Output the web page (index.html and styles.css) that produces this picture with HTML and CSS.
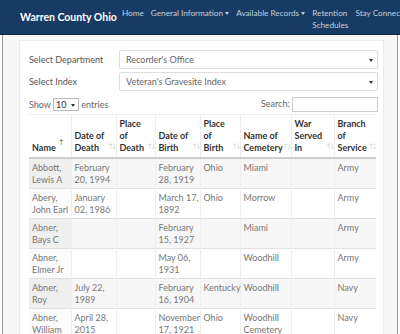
FILE: index.html
```html
<!DOCTYPE html>
<html lang="en">
<head>
  <meta charset="UTF-8">
  <meta name="viewport" content="width=device-width, initial-scale=1.0">
  <title>Veteran's Gravesite Index</title>
  <link rel="stylesheet" href="styles.css">
</head>
<body>
  <nav class="navbar">
    <span class="brand">Warren County Ohio</span>
    <ul class="nav-links">
      <li>Home</li>
      <li>General Information <span class="caret"></span></li>
      <li>Available Records <span class="caret"></span></li>
      <li>Retention<br>Schedules</li>
      <li>Stay Connected</li>
    </ul>
  </nav>

  <div class="frame">
    <div class="panel">
      <div class="field">
        <label>Select Department</label>
        <div class="select">Recorder's Office</div>
      </div>
      <div class="field">
        <label>Select Index</label>
        <div class="select">Veteran's Gravesite Index</div>
      </div>

      <div class="table-tools">
        <div>Show <span class="len">10 <span class="tri"></span></span> entries</div>
        <div>Search: <span class="search"></span></div>
      </div>

      <table id="tabla">
        <colgroup>
          <col style="width:42px">
          <col style="width:45px">
          <col style="width:39px">
          <col style="width:45px">
          <col style="width:40px">
          <col style="width:51px">
          <col style="width:43px">
          <col style="width:42px">
        </colgroup>
        <thead>
          <tr>
            <th class="sorted">Name</th>
            <th>Date of Death</th>
            <th>Place of Death</th>
            <th>Date of Birth</th>
            <th>Place of Birth</th>
            <th>Name of Cemetery</th>
            <th>War Served In</th>
            <th>Branch of Service</th>
          </tr>
        </thead>
        <tbody></tbody>
      </table>
    </div>
  </div>

  <script>
    const registros = [
      ["Abbott, Lewis A", "February 20, 1994", "", "February 28, 1919", "Ohio", "Miami", "", "Army"],
      ["Abery, John Earl", "January 02, 1986", "", "March 17, 1892", "Ohio", "Morrow", "", "Army"],
      ["Abner, Bays C", "", "", "February 15, 1927", "", "Miami", "", "Army"],
      ["Abner, Elmer Jr", "", "", "May 06, 1931", "", "Woodhill", "", "Army"],
      ["Abner, Roy", "July 22, 1989", "", "February 16, 1904", "Kentucky", "Woodhill", "", "Navy"],
      ["Abner, William", "April 28, 2015", "", "November 17, 1921", "Ohio", "Woodhill Cemetery", "", "Navy"]
    ];

    const tbody = document.querySelector("#tabla tbody");
    registros.forEach((r, i) => {
      const fila = `<tr class="${i % 2 === 0 ? "odd" : "even"}">
        ${r.map((c, j) => `<td${j === 0 ? ' class="sorting_1"' : ""}>${c}</td>`).join("")}
      </tr>`;
      tbody.innerHTML += fila;
    });
  </script>
</body>
</html>
```

FILE: styles.css
```css
:root {
  --nav-color: #173b64;
  --text-color: #555;
  --muted-color: #777;
  --line-color: #e4e4e4;
}

body {
  font-family: 'Lato', 'Open Sans', sans-serif;
  margin: 0;
  padding: 0;
  background-color: #fff;
  color: var(--text-color);
  font-size: 9px;
  height: 334px;
  overflow: hidden;
}

.navbar {
  background-color: var(--nav-color);
  border-bottom: 1px solid #0c2544;
  height: 34px;
  display: flex;
  align-items: flex-start;
  padding-left: 20px;
  white-space: nowrap;
  overflow: hidden;
}

.brand {
  flex-shrink: 0;
  color: #fff;
  font-weight: bold;
  font-size: 10.5px;
  margin-top: 11px;
  width: 102px;
}

.nav-links {
  list-style: none;
  display: flex;
  gap: 7px;
  margin: 7px 0 0;
  padding: 0;
  color: #c5cfdc;
  font-size: 8.2px;
  line-height: 12px;
}

.caret {
  display: inline-block;
  border-left: 2.5px solid transparent;
  border-right: 2.5px solid transparent;
  border-top: 3px solid #c5cfdc;
  vertical-align: middle;
}

.frame {
  margin: 0 2px;
  border-left: 1px solid #999;
  border-right: 1px solid #999;
  border-bottom: 1px solid #999;
  height: 296px;
  background-color: #f7f7f7;
  padding: 5px 13px 0 16px;
  overflow: hidden;
}

.panel {
  background-color: #fff;
  border: 1px solid #ececec;
  height: 100%;
  padding: 9px 5px 0 9px;
}

.field {
  display: flex;
  align-items: center;
  margin-bottom: 3px;
}

.field label {
  width: 90px;
  color: #555;
}

.select {
  flex: 1;
  height: 17px;
  line-height: 17px;
  border: 1px solid #ddd;
  border-radius: 2px;
  padding-left: 6px;
  color: #666;
  position: relative;
}

.select::after {
  content: "";
  position: absolute;
  right: 4px;
  top: 8px;
  border-left: 2px solid transparent;
  border-right: 2px solid transparent;
  border-top: 3px solid #333;
}

.table-tools {
  display: flex;
  justify-content: space-between;
  align-items: center;
  margin: 6px 0 2px;
  color: #666;
}

.len {
  display: inline-block;
  border: 1px solid #bbb;
  padding: 0 2px;
  width: 20px;
  line-height: 11px;
  color: #333;
  position: relative;
}

.tri {
  position: absolute;
  right: 3px;
  top: 5px;
  border-left: 2px solid transparent;
  border-right: 2px solid transparent;
  border-top: 3px solid #333;
}

.search {
  display: inline-block;
  width: 84px;
  height: 13px;
  border: 1px solid #ccc;
  vertical-align: middle;
}

table {
  width: 347px;
  table-layout: fixed;
  border-collapse: collapse;
  line-height: 12px;
}

th, td {
  padding: 3px 1px 2px 3px;
  text-align: left;
  vertical-align: top;
  border-left: 1px solid #eee;
}

th:first-child, td:first-child {
  border-left: none;
}

th {
  vertical-align: bottom;
  color: #333;
  font-weight: bold;
  border-top: 1px solid #eee;
  border-bottom: 2px solid #cfcfcf;
  position: relative;
  padding-right: 6px;
  padding-bottom: 3px;
}

th::after {
  content: "\2191\2193";
  position: absolute;
  right: 0;
  bottom: 5px;
  font-size: 6px;
  letter-spacing: -1px;
  color: #ccc;
  font-weight: normal;
}

th.sorted::after {
  content: "\2191";
  color: #444;
  bottom: 9px;
  right: 8px;
}

td {
  color: var(--muted-color);
  border-top: 1px solid #e0e0e0;
  height: 23px;
}

tr.odd td {
  background-color: #f7f7f7;
}

tr.odd td.sorting_1 {
  background-color: #efefef;
}

tr.even td.sorting_1 {
  background-color: #fbfbfb;
}
```
